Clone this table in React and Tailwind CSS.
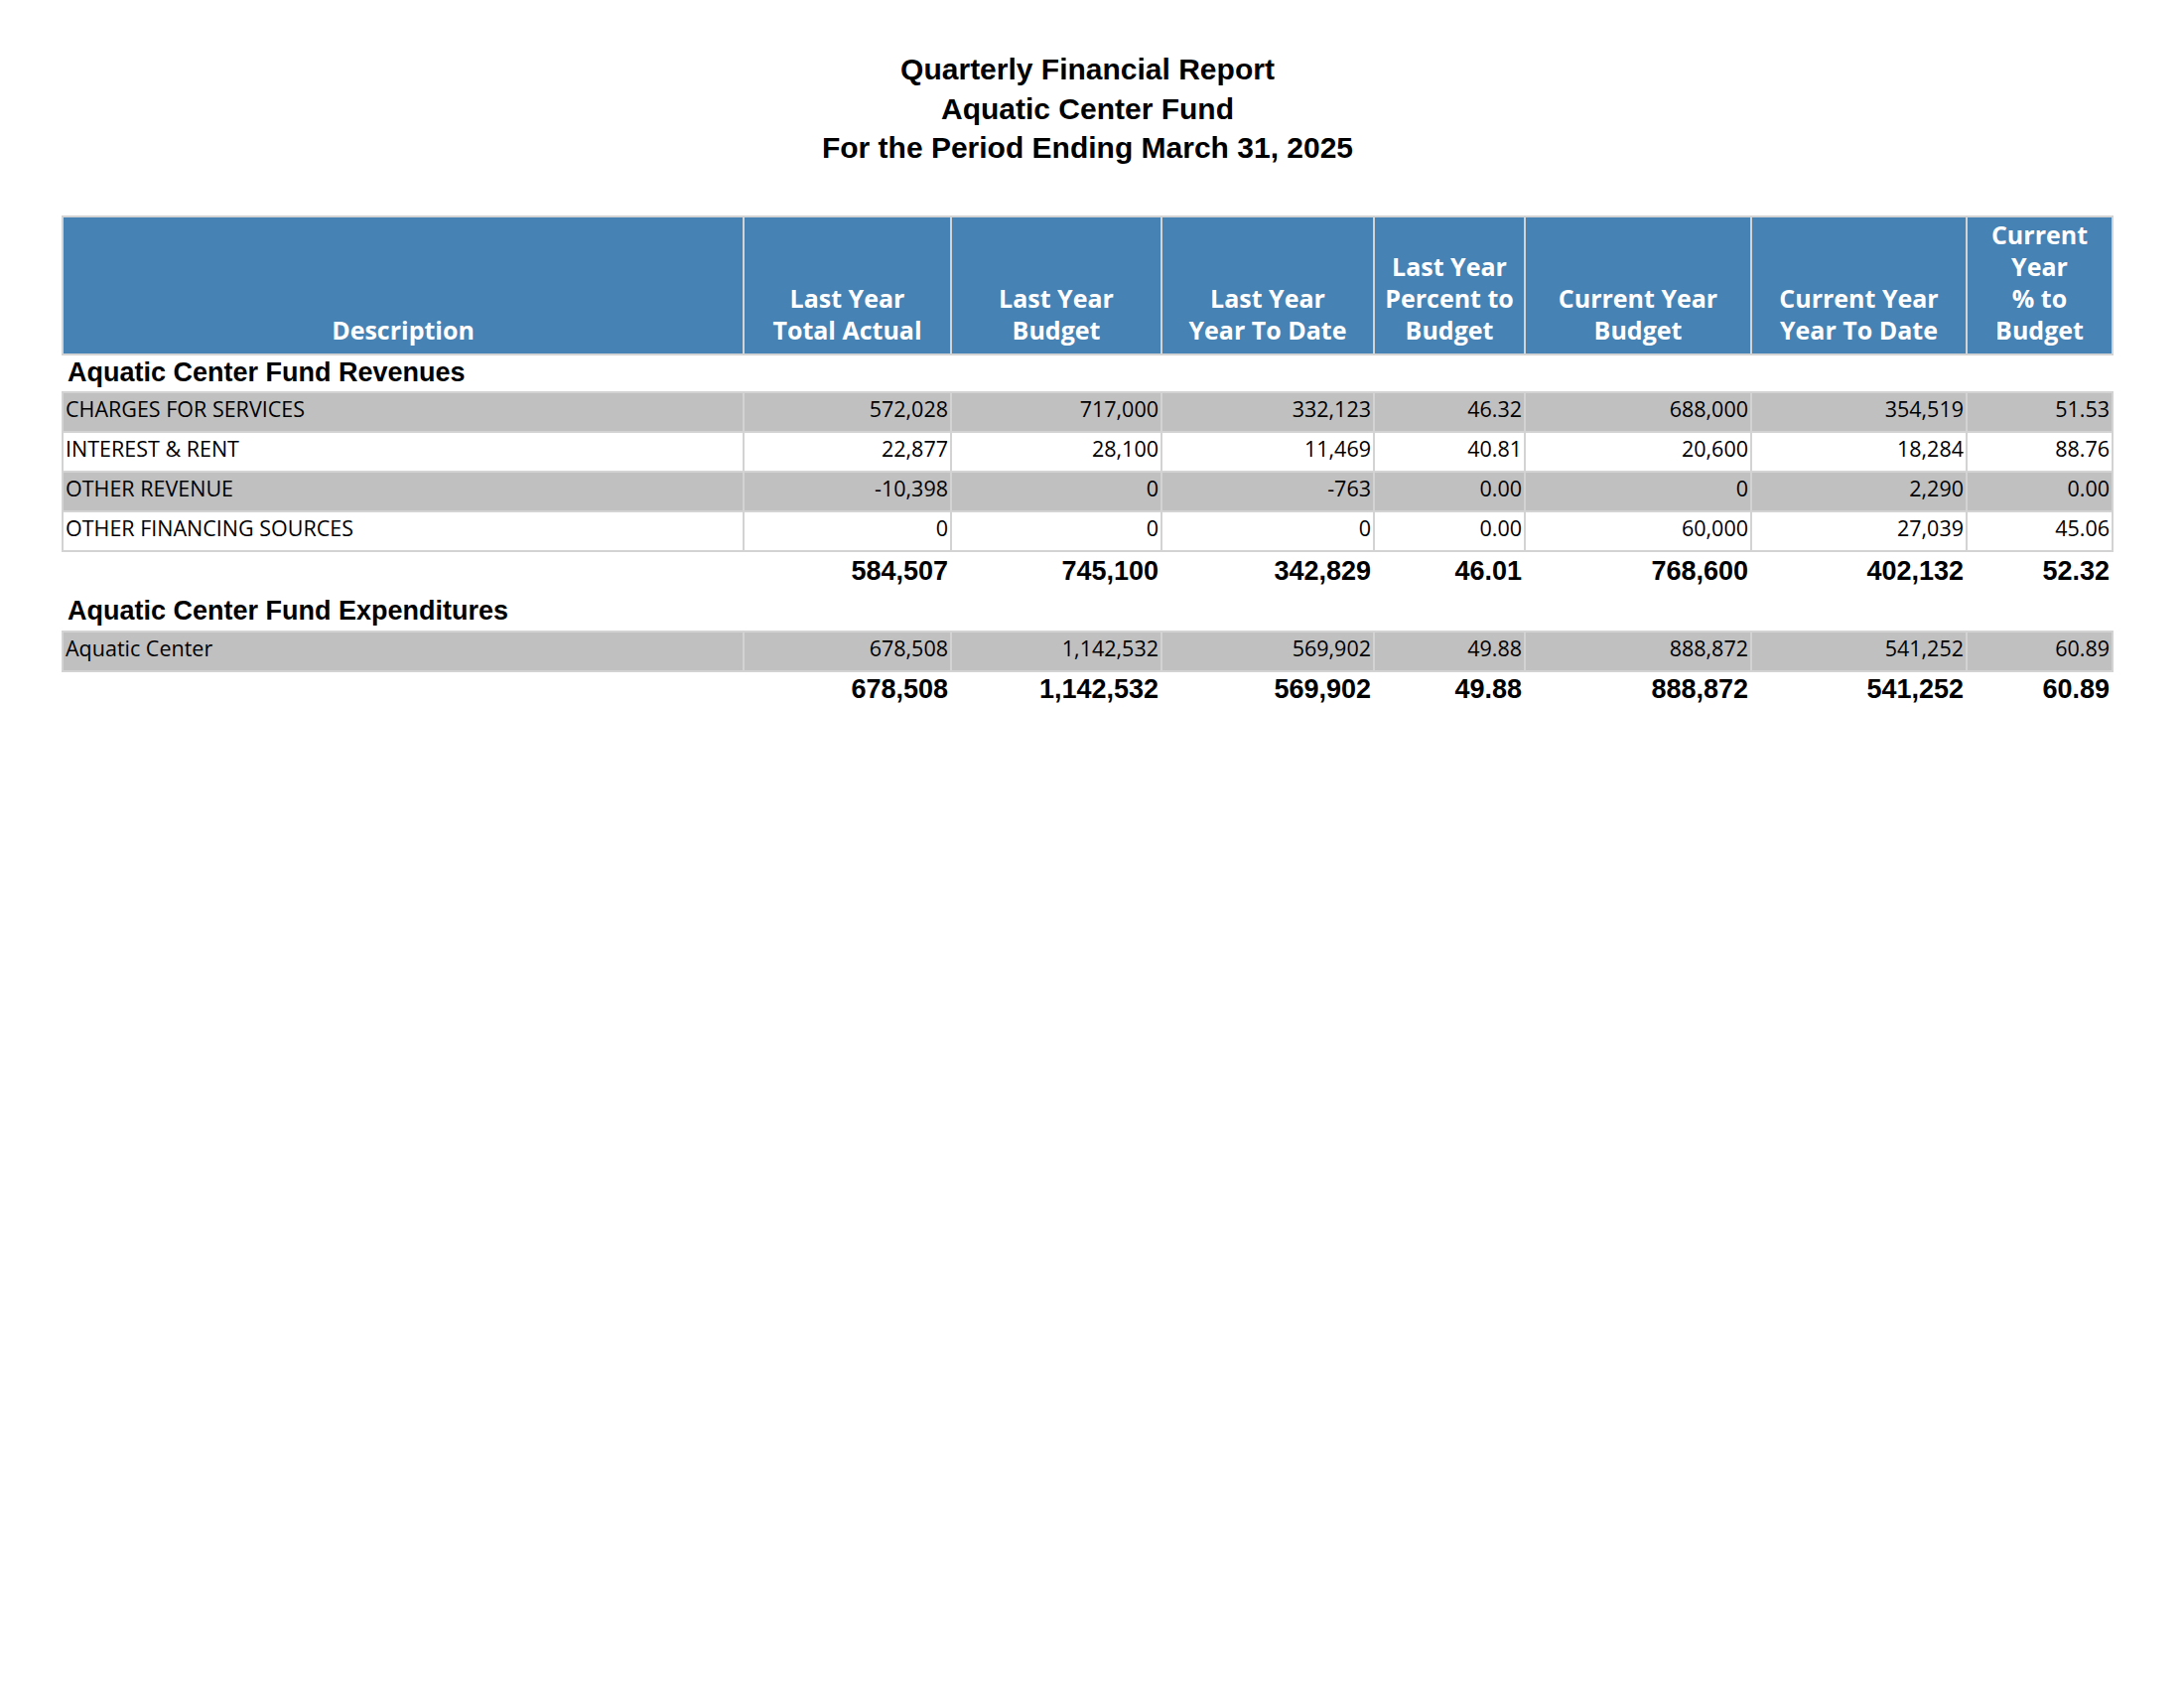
const columns = [
  { w: "w-[686px]", label: ["Description"] },
  { w: "w-[209px]", label: ["Last Year", "Total Actual"] },
  { w: "w-[212px]", label: ["Last Year", "Budget"] },
  { w: "w-[214px]", label: ["Last Year", "Year To Date"] },
  { w: "w-[152px]", label: ["Last Year", "Percent to", "Budget"] },
  { w: "w-[228px]", label: ["Current Year", "Budget"] },
  { w: "w-[217px]", label: ["Current Year", "Year To Date"] },
  { w: "w-[147px]", label: ["Current", "Year", "% to", "Budget"] },
];

const revenues = [
  ["CHARGES FOR SERVICES", "572,028", "717,000", "332,123", "46.32", "688,000", "354,519", "51.53"],
  ["INTEREST & RENT", "22,877", "28,100", "11,469", "40.81", "20,600", "18,284", "88.76"],
  ["OTHER REVENUE", "-10,398", "0", "-763", "0.00", "0", "2,290", "0.00"],
  ["OTHER FINANCING SOURCES", "0", "0", "0", "0.00", "60,000", "27,039", "45.06"],
];
const revenueTotal = ["584,507", "745,100", "342,829", "46.01", "768,600", "402,132", "52.32"];

const expenditures = [
  ["Aquatic Center", "678,508", "1,142,532", "569,902", "49.88", "888,872", "541,252", "60.89"],
];
const expenditureTotal = ["678,508", "1,142,532", "569,902", "49.88", "888,872", "541,252", "60.89"];

function SectionTitle({ children, cls }) {
  return (
    <tr>
      <td colSpan={8} className={cls + " pl-[5px] align-top font-['Liberation_Sans',Arial,sans-serif] text-[27px] font-bold leading-[31px] text-black"}>
        {children}
      </td>
    </tr>
  );
}

function DataRow({ row, index }) {
  const bg = index % 2 === 0 ? "bg-[#c0c0c0]" : "bg-white";
  return (
    <tr className={bg}>
      {row.map((cell, i) => (
        <td
          key={i}
          className={
            "h-[40px] border-2 border-[#d3d3d3] align-top pt-[1px] font-['Open_Sans',sans-serif] text-[21.5px] leading-[29px] text-black " +
            (i === 0 ? "pl-[2px] text-left" : "pr-[2px] text-right")
          }
        >
          {cell}
        </td>
      ))}
    </tr>
  );
}

function TotalRow({ values, cls }) {
  return (
    <tr>
      <td className={cls}></td>
      {values.map((v, i) => (
        <td key={i} className={cls + " pr-[3px] text-right align-top font-['Liberation_Sans',Arial,sans-serif] text-[27px] font-bold leading-[31px] text-black"}>
          {v}
        </td>
      ))}
    </tr>
  );
}

export default function App() {
  return (
    <div className="min-h-screen bg-white">
      <div className="ml-[62px] w-[2067px] pt-[50px]">
        <div className="text-center font-['Liberation_Sans',Arial,sans-serif] text-[30px] font-bold leading-[39.5px] text-black">
          <div>Quarterly Financial Report</div>
          <div>Aquatic Center Fund</div>
          <div>For the Period Ending March 31, 2025</div>
        </div>

        <table className="mt-[48px] w-[2067px] table-fixed border-collapse">
          <colgroup>
            {columns.map((c, i) => (
              <col key={i} className={c.w} />
            ))}
          </colgroup>
          <thead>
            <tr>
              {columns.map((c, i) => (
                <th
                  key={i}
                  className="h-[139px] border-2 border-[#d3d3d3] bg-[#4682b4] pb-[8px] text-center align-bottom font-['Open_Sans',sans-serif] text-[25px] font-bold leading-[32px] text-white"
                >
                  {c.label.map((l, j) => (
                    <div key={j}>{l}</div>
                  ))}
                </th>
              ))}
            </tr>
          </thead>
          <tbody>
            <SectionTitle cls="h-[38px] pt-[2px]">Aquatic Center Fund Revenues</SectionTitle>
            {revenues.map((row, i) => (
              <DataRow key={i} row={row} index={i} />
            ))}
            <TotalRow values={revenueTotal} cls="h-[41px] pt-[4px]" />
            <SectionTitle cls="h-[40px] pt-[4px]">Aquatic Center Fund Expenditures</SectionTitle>
            {expenditures.map((row, i) => (
              <DataRow key={i} row={row} index={i} />
            ))}
            <TotalRow values={expenditureTotal} cls="h-[39px] pt-[2px]" />
          </tbody>
        </table>
      </div>
    </div>
  );
}
